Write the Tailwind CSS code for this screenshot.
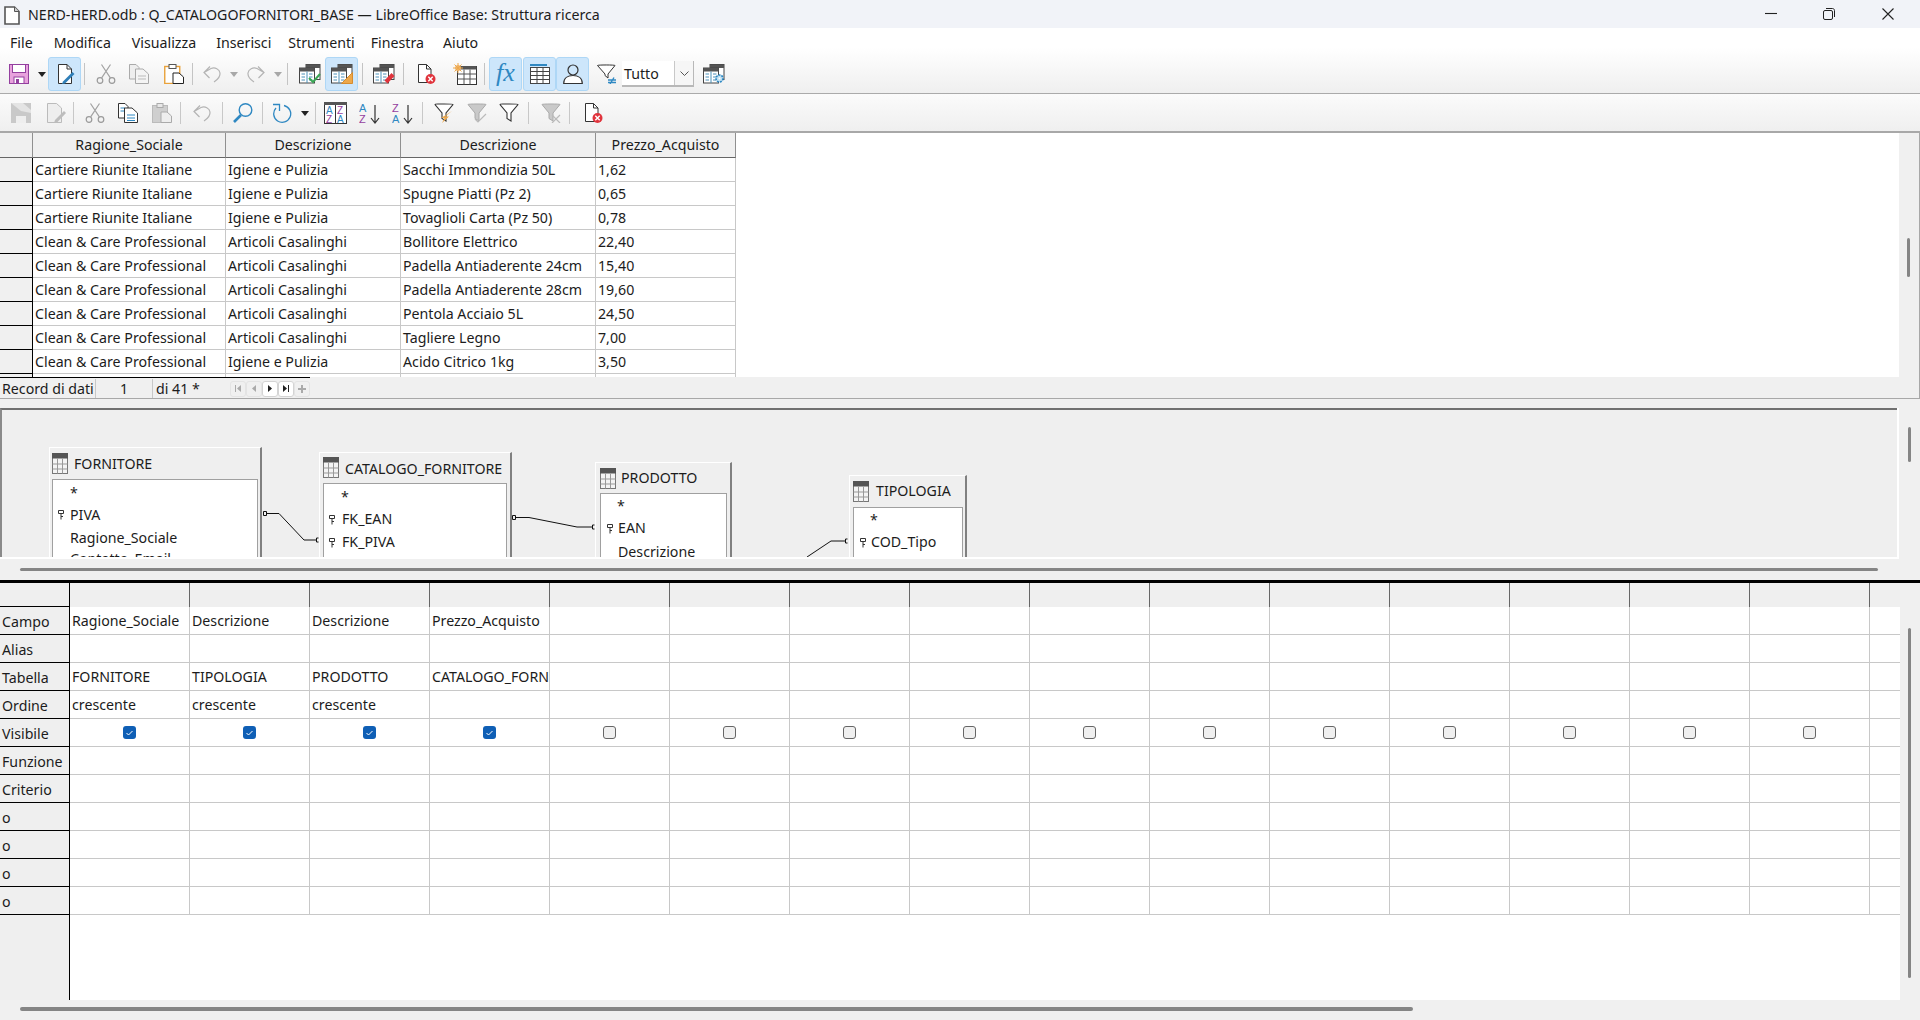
<!DOCTYPE html>
<html lang="it">
<head>
    <meta charset="UTF-8">
    <title>NERD-HERD.odb : Q_CATALOGOFORNITORI_BASE — LibreOffice Base: Struttura ricerca</title>
    <script src="https://cdn.jsdelivr.net/npm/@tailwindcss/browser@4"></script>
</head>
<body class="w-[1920px] h-[1020px] overflow-hidden bg-[#f0f0f0] text-[#1c1c1c] text-[14.2px] font-['Noto_Sans',sans-serif]">

    <!-- icon set -->
    <svg class="hidden">
        <symbol id="page" viewBox="0 0 20 20"><path d="M3.5 .5H12L16.5 5V19.5H3.5Z" fill="#fff" stroke="#333"/><path d="M12 .5V5H16.5" fill="none" stroke="#333"/></symbol>
        <symbol id="pagex" viewBox="0 0 20 20"><path d="M2.5 .5H10.5L15 5V18.5H2.5Z" fill="#fff" stroke="#333"/><path d="M10.5 .5V5H15" fill="none" stroke="#333"/><circle cx="14.5" cy="15" r="5" fill="#e0333c"/><path d="M12.3 12.8L16.7 17.2M16.7 12.8L12.3 17.2" stroke="#fff" stroke-width="1.4"/></symbol>
        <symbol id="cut" viewBox="0 0 20 20"><circle cx="4" cy="16.5" r="2.8" fill="none" stroke="#9a9a9a" stroke-width="1.2"/><circle cx="16" cy="16.5" r="2.8" fill="none" stroke="#9a9a9a" stroke-width="1.2"/><path d="M5.5 14.2L14.5 .5M14.5 14.2L5.5 .5" stroke="#a2a2a2" stroke-width="1.2"/></symbol>
        <symbol id="undo" viewBox="0 0 20 20"><path d="M8 2.5L2 8.5L7.5 14M2 8.5L9 4.5C13 3 17.5 5 18 9C18.5 13 15 16 12 18" fill="none" stroke="#b4b4b4" stroke-width="1.2"/></symbol>
        <symbol id="qbase" viewBox="0 0 22 20"><rect x="7" y=".5" width="14" height="15" fill="#fff" stroke="#444"/><rect x="7" y=".5" width="14" height="3.5" fill="#555"/><rect x=".5" y="4" width="15" height="15" fill="#fff" stroke="#444"/><rect x=".5" y="4" width="15" height="3.5" fill="#555"/><path d="M8 7.5V19M2.5 10H6M2.5 13H6M2.5 16H6M10 10H13.5M10 13H13.5M10 16H13.5" stroke="#4a90b8"/></symbol>
        <symbol id="tbl" viewBox="0 0 16 21"><rect x=".5" y=".5" width="15" height="20" fill="#f4f4f4" stroke="#777"/><rect width="16" height="5.5" fill="#555"/><path d="M.5 11H15.5M.5 16H15.5M5.5 5.5V20.5M10.5 5.5V20.5" stroke="#999"/></symbol>
        <symbol id="key" viewBox="0 0 6 10"><path d="M.5.5H5.5V3.5H.5ZM3 3.5V9.5M3 6.5H5" fill="none" stroke="#333"/></symbol>
        <symbol id="funnel" viewBox="0 0 20 20"><path d="M1 1.5C1 .8 19 .8 19 1.5L12 10V18L8 15.5V10Z" fill="#fff" stroke="#333" stroke-width="1.1"/></symbol>
    </svg>

    <!-- title bar -->
    <div class="h-[28px] bg-[#f1f3f8] flex items-center">
        <svg class="ml-[4px] mt-[3px] w-[16px] h-[19px]" viewBox="0 0 16 19"><path d="M1 1H10.5L15 5.5V18H1Z" fill="#fff" stroke="#555" stroke-width="1.6"/><path d="M10.5 1V5.5H15" fill="#ccc" stroke="#555"/></svg>
        <span class="ml-[8px] pt-[1px]">NERD-HERD.odb : Q_CATALOGOFORNITORI_BASE — LibreOffice Base: Struttura ricerca</span>
        <svg class="ml-auto w-[12px] h-[12px]" viewBox="0 0 12 12"><path d="M0 5.5H12" stroke="#222" stroke-width="1.1"/></svg>
        <svg class="ml-[46px] w-[12px] h-[12px]" viewBox="0 0 12 12"><rect x=".5" y="2.5" width="9" height="9" rx="1.5" fill="none" stroke="#222"/><path d="M3 .5H9.5C10.6 .5 11.5 1.4 11.5 2.5V9" fill="none" stroke="#222"/></svg>
        <svg class="ml-[47px] mr-[26px] w-[12px] h-[12px]" viewBox="0 0 12 12"><path d="M.5 .5L11.5 11.5M11.5 .5L.5 11.5" stroke="#222" stroke-width="1.1"/></svg>
    </div>

    <!-- menu + standard toolbar -->
    <div class="h-[66px] border-b border-[#aaaaaa] bg-gradient-to-b from-white from-30% to-[#efefef]">
        <div class="h-[29px] flex items-center">
            <span class="ml-[10px]">File</span>
            <span class="ml-[21px]">Modifica</span>
            <span class="ml-[21px]">Visualizza</span>
            <span class="ml-[20px]">Inserisci</span>
            <span class="ml-[17px]">Strumenti</span>
            <span class="ml-[16px]">Finestra</span>
            <span class="ml-[19px]">Aiuto</span>
        </div>
        <div class="h-[34px] flex items-center">
            <svg class="ml-[9px] w-[20px] h-[20px]" viewBox="0 0 20 20"><rect x=".5" y=".5" width="19" height="19" fill="#e8a2dd" stroke="#94409f"/><rect x="3.5" y=".5" width="13" height="8" fill="#fff" stroke="#94409f"/><rect x="5" y="13" width="10" height="6.5" fill="#fff" stroke="#94409f"/><rect x="7" y="15" width="3" height="4.5" fill="#94409f"/></svg>
            <svg class="ml-[9px] w-[8px] h-[5px]" viewBox="0 0 8 5"><path d="M0 0H8L4 5Z" fill="#222"/></svg>
            <div class="ml-[2px] w-[33px] h-[34px] flex items-center justify-center rounded-[3px] bg-[#cde6fb] border border-[#aed7f6]">
                <svg class="w-[20px] h-[20px]" viewBox="0 0 20 20"><use href="#page"/><path d="M17.5 8L19.5 10L10 19.5L7 20L8 17.5Z" fill="#2f7fb8"/></svg>
            </div>
            <div class="ml-[3px] w-px h-[22px] bg-[#c4c4c4]"></div>
            <svg class="ml-[11px] w-[20px] h-[20px]"><use href="#cut"/></svg>
            <svg class="ml-[13px] w-[20px] h-[20px]" viewBox="0 0 20 20"><path d="M.5 .5H7L10 3.5V15H.5Z" fill="#eee" stroke="#aaa"/><path d="M6.5 5H14L19.5 10V19.5H6.5Z" fill="#f4f4f4" stroke="#aaa"/><path d="M9 12H17M9 15H17" stroke="#bbb"/></svg>
            <svg class="ml-[15px] w-[20px] h-[20px]" viewBox="0 0 20 20"><rect x=".75" y="2.5" width="15" height="17" fill="#fff" stroke="#e9a23b" stroke-width="1.4"/><rect x="5" y=".5" width="7" height="4" fill="#fff" stroke="#555"/><path d="M9 9H15L19.5 13V19.5H9Z" fill="#fff" stroke="#222"/></svg>
            <div class="ml-[8px] w-px h-[22px] bg-[#c4c4c4]"></div>
            <svg class="ml-[9px] w-[20px] h-[20px]"><use href="#undo"/></svg>
            <svg class="ml-[8px] w-[8px] h-[5px]" viewBox="0 0 8 5"><path d="M0 0H8L4 5Z" fill="#a8a8a8"/></svg>
            <svg class="ml-[8px] w-[20px] h-[20px] -scale-x-100"><use href="#undo"/></svg>
            <svg class="ml-[8px] w-[8px] h-[5px]" viewBox="0 0 8 5"><path d="M0 0H8L4 5Z" fill="#a8a8a8"/></svg>
            <div class="ml-[5px] w-px h-[22px] bg-[#c4c4c4]"></div>
            <svg class="ml-[11px] w-[22px] h-[20px]" viewBox="0 0 22 20"><use href="#qbase"/><path d="M10 14L14 18L21 10" fill="none" stroke="#3aa655" stroke-width="2"/></svg>
            <div class="ml-[4px] w-[33px] h-[34px] flex items-center justify-center rounded-[3px] bg-[#cde6fb] border border-[#aed7f6]">
                <svg class="w-[22px] h-[20px]" viewBox="0 0 22 20"><use href="#qbase"/><path d="M21.5 8.5V19.5H10.5Z" fill="#eda84b" stroke="#d78c2e"/></svg>
            </div>
            <div class="ml-[4px] w-px h-[22px] bg-[#c4c4c4]"></div>
            <svg class="ml-[10px] w-[22px] h-[20px]" viewBox="0 0 22 20"><use href="#qbase"/><path d="M18.5 9L21.5 12L14.5 19.5L11.5 16.5Z" fill="#e0333c"/></svg>
            <div class="ml-[8px] w-px h-[22px] bg-[#c4c4c4]"></div>
            <svg class="ml-[12px] w-[20px] h-[20px]"><use href="#pagex"/></svg>
            <svg class="ml-[17px] w-[24px] h-[22px]" viewBox="0 0 24 22"><rect x="4.5" y="3.5" width="19" height="18" fill="#fff" stroke="#333"/><rect x="4.5" y="3" width="19" height="3.5" fill="#555"/><path d="M4.5 11H23.5M4.5 16H23.5M11 6.5V21.5M17 6.5V21.5" stroke="#555"/><circle cx="5" cy="5" r="3" fill="#f2b978"/><path d="M5 0V10M0 5H10M1.5 1.5L8.5 8.5M8.5 1.5L1.5 8.5" stroke="#eda84b"/></svg>
            <div class="ml-[7px] w-px h-[22px] bg-[#c4c4c4]"></div>
            <div class="ml-[4px] w-[33px] h-[34px] flex items-center justify-center rounded-[3px] bg-[#cde6fb] border border-[#aed7f6] text-[#2f88c2] text-[26px] italic font-['Liberation_Serif',serif] leading-none pb-[3px]">fx</div>
            <div class="ml-[1px] w-[33px] h-[34px] flex items-center justify-center rounded-[3px] bg-[#cde6fb] border border-[#aed7f6]">
                <svg class="w-[20px] h-[20px]" viewBox="0 0 20 20"><rect x=".5" y="3.5" width="19" height="16" fill="#fff" stroke="#444"/><path d="M0 1H17" stroke="#2f88c2" stroke-width="2"/><path d="M.5 7.5H19.5M.5 11.5H19.5M.5 15.5H19.5M7 3.5V19.5M13 3.5V19.5" stroke="#444"/></svg>
            </div>
            <div class="w-[33px] h-[34px] flex items-center justify-center rounded-[3px] bg-[#cde6fb] border border-[#aed7f6]">
                <svg class="w-[20px] h-[20px]" viewBox="0 0 20 20"><circle cx="10" cy="6" r="5" fill="none" stroke="#333" stroke-width="1.2"/><path d="M.7 19.5C.7 14 5 11.5 10 11.5S19.3 14 19.3 19.5Z" fill="#fff" stroke="#333" stroke-width="1.2"/></svg>
            </div>
            <svg class="ml-[8px] w-[20px] h-[20px]" viewBox="0 0 20 20"><path d="M.5 1.5C.5 .8 18 .8 18 1.5L11 10V14L8 11.5V10Z" fill="#fff" stroke="#333"/><path d="M11 16H19M11 18.5H19M17 13.5L13 20" stroke="#2f88c2" stroke-width="1.4"/></svg>
            <div class="ml-[5px] w-[72px] h-[26px] flex items-center bg-white border-b-2 border-r border-[#b8b8b8]">
                <span class="ml-[2px] flex-1 pt-[2px]">Tutto</span>
                <div class="w-[19px] h-[24px] flex items-center justify-center border-l border-[#c8c8c8] bg-[#f6f6f6]">
                    <svg class="w-[9px] h-[5px]" viewBox="0 0 9 5"><path d="M.5 .5L4.5 4.5L8.5 .5" fill="none" stroke="#555"/></svg>
                </div>
            </div>
            <svg class="ml-[9px] w-[22px] h-[20px]" viewBox="0 0 22 20"><use href="#qbase"/><circle cx="16.5" cy="14.5" r="3.5" fill="#bfe0f2" stroke="#2f88c2" stroke-width="1.6" stroke-dasharray="2 1"/><circle cx="16.5" cy="14.5" r="1" fill="#fff"/></svg>
        </div>
    </div>

    <!-- table data toolbar -->
    <div class="h-[39px] pt-[1px] border-b-2 border-[#a8a8a8] bg-gradient-to-b from-[#fbfbfb] to-[#efefef] flex items-center">
        <svg class="ml-[11px] w-[20px] h-[20px]" viewBox="0 0 20 20"><rect width="20" height="20" fill="#c9c9c9"/><path d="M0 0H12L20 7V10L10 8Z" fill="#e4e4e4"/><rect x="5" y="13" width="10" height="7" fill="#eee"/></svg>
        <svg class="ml-[15px] w-[20px] h-[20px]" viewBox="0 0 20 20"><path d="M1.5 .5H10.5L15.5 5V19.5H1.5Z" fill="#eee" stroke="#bbb"/><path d="M18 8L20 10L11 19.5L8 20L9 17Z" fill="#bdbdbd"/></svg>
        <div class="ml-[7px] w-px h-[22px] bg-[#c8c8c8]"></div>
        <svg class="ml-[11px] w-[20px] h-[20px]"><use href="#cut"/></svg>
        <svg class="ml-[13px] w-[20px] h-[20px]" viewBox="0 0 20 20"><path d="M.5 .5H7L10 3.5V15H.5Z" fill="#fff" stroke="#333"/><path d="M2.5 5H7M2.5 8H6" stroke="#2f88c2"/><path d="M6.5 5H14L19.5 10V19.5H6.5Z" fill="#fff" stroke="#333"/><path d="M9 12H17M9 15H17M9 17.5H17" stroke="#2f88c2"/></svg>
        <svg class="ml-[14px] w-[20px] h-[20px]" viewBox="0 0 20 20"><rect x=".5" y="2.5" width="15" height="17" fill="#cfcfcf" stroke="#bbb"/><rect x="5" y=".5" width="6" height="4" fill="#e8e8e8" stroke="#aaa"/><path d="M9 9H15L19.5 13V19.5H9Z" fill="#eee" stroke="#aaa"/></svg>
        <div class="ml-[8px] w-px h-[22px] bg-[#c8c8c8]"></div>
        <svg class="ml-[11px] w-[20px] h-[20px]"><use href="#undo"/></svg>
        <div class="ml-[10px] w-px h-[22px] bg-[#c8c8c8]"></div>
        <svg class="ml-[10px] w-[20px] h-[20px]" viewBox="0 0 20 20"><circle cx="12.5" cy="7" r="6.3" fill="none" stroke="#2f88c2" stroke-width="1.4"/><path d="M8 12L1 19" stroke="#2f88c2" stroke-width="2.6"/></svg>
        <div class="ml-[9px] w-px h-[22px] bg-[#c8c8c8]"></div>
        <svg class="ml-[9px] w-[20px] h-[20px]" viewBox="0 0 20 20"><path d="M12 2.5A8.5 8.5 0 1 1 4 5" fill="none" stroke="#2f88c2" stroke-width="1.3"/><path d="M1 1.5H7.5V8" fill="none" stroke="#2f88c2" stroke-width="1.3"/></svg>
        <svg class="ml-[9px] w-[8px] h-[5px]" viewBox="0 0 8 5"><path d="M0 0H8L4 5Z" fill="#222"/></svg>
        <div class="ml-[6px] w-px h-[22px] bg-[#c8c8c8]"></div>
        <svg class="ml-[8px] w-[23px] h-[22px]" viewBox="0 0 23 22" font-family="Liberation Sans" font-size="10"><rect x=".5" y=".5" width="22" height="21" fill="#fff" stroke="#333"/><rect width="23" height="3" fill="#555"/><path d="M11.5 3V21" stroke="#333"/><text x="2" y="12" fill="#2f88c2">A</text><text x="13" y="12" fill="#94409f">Z</text><text x="2" y="21" fill="#94409f">Z</text><text x="13" y="21" fill="#2f88c2">A</text></svg>
        <svg class="ml-[12px] w-[23px] h-[22px]" viewBox="0 0 23 22" font-family="Liberation Sans" font-size="11"><text x="0" y="10" fill="#2f88c2">A</text><text x="0" y="21" fill="#94409f">Z</text><path d="M16 3V21M12 16L16 21L20 16" fill="none" stroke="#333" stroke-width="1.2"/></svg>
        <svg class="ml-[10px] w-[23px] h-[22px]" viewBox="0 0 23 22" font-family="Liberation Sans" font-size="11"><text x="0" y="10" fill="#94409f">Z</text><text x="0" y="21" fill="#2f88c2">A</text><path d="M16 3V21M12 16L16 21L20 16" fill="none" stroke="#333" stroke-width="1.2"/></svg>
        <div class="ml-[7px] w-px h-[22px] bg-[#c8c8c8]"></div>
        <svg class="ml-[11px] w-[20px] h-[20px]" viewBox="0 0 20 20"><path d="M1 1.5C1 .8 19 .8 19 1.5L12 10V18L8 15.5V10Z" fill="#fff" stroke="#333" stroke-width="1.1"/><path d="M18 8L11 13.5H15L8 20L10.5 15H7Z" fill="#eda84b"/></svg>
        <svg class="ml-[13px] w-[20px] h-[20px]" viewBox="0 0 20 20"><path d="M1 1.5C1 .8 19 .8 19 1.5L12 10V18L8 15.5V10Z" fill="#c9c9c9" stroke="#aaa"/><path d="M8 16L11 19L19 11" fill="none" stroke="#bbb" stroke-width="1.2"/></svg>
        <svg class="ml-[12px] w-[20px] h-[20px]"><use href="#funnel"/></svg>
        <div class="ml-[9px] w-px h-[22px] bg-[#c8c8c8]"></div>
        <svg class="ml-[12px] w-[20px] h-[20px]" viewBox="0 0 20 20"><path d="M1 1.5C1 .8 19 .8 19 1.5L12 10V18L8 15.5V10Z" fill="#c9c9c9" stroke="#aaa"/><path d="M11 12L19 20M19 12L11 20" stroke="#bbb" stroke-width="1.2"/></svg>
        <div class="ml-[8px] w-px h-[22px] bg-[#c8c8c8]"></div>
        <svg class="ml-[13px] w-[20px] h-[20px]"><use href="#pagex"/></svg>
    </div>

    <!-- result grid -->
    <div class="h-[266px] border-r border-[#a8a8a8] flex flex-col">
        <div class="h-[244px] flex">
            <div class="w-[1899px] bg-white overflow-hidden">
                <div id="result" class="grid grid-cols-[33px_193px_175px_195px_140px] w-[736px]"></div>
            </div>
            <div class="ml-[8px] mt-[105px] w-[3px] h-[39px] rounded-full bg-[#858585]"></div>
        </div>
        <div class="h-[22px] pt-[2px] border-b border-[#a8a8a8] flex items-center relative">
            <div class="absolute left-0 top-0 w-[310px] border-t border-black"></div>
            <span class="ml-[2px] w-[93px] whitespace-nowrap">Record di dati</span>
            <div class="w-[58px] h-[19px] border-x border-[#c8c8c8] text-center leading-[19px]">1</div>
            <span class="ml-[3px] w-[74px]">di 41 *</span>
            <div class="flex h-[16px]">
                <div class="w-[16px] flex items-center justify-center border border-[#e4e4e4] rounded-[3px]"><svg class="w-[6px] h-[7px]" viewBox="0 0 6 7"><path d="M0 0H1V7H0ZM6 0V7L2 3.5Z" fill="#aaa"/></svg></div>
                <div class="w-[16px] flex items-center justify-center border border-[#e4e4e4] rounded-[3px]"><svg class="w-[4px] h-[7px]" viewBox="0 0 4 7"><path d="M4 0V7L0 3.5Z" fill="#aaa"/></svg></div>
                <div class="w-[16px] flex items-center justify-center border border-[#d4d4d4] rounded-[3px] bg-white"><svg class="w-[4px] h-[7px]" viewBox="0 0 4 7"><path d="M0 0V7L4 3.5Z" fill="#222"/></svg></div>
                <div class="w-[16px] flex items-center justify-center border border-[#d4d4d4] rounded-[3px] bg-white"><svg class="w-[6px] h-[7px]" viewBox="0 0 6 7"><path d="M0 0V7L4 3.5ZM5 0H6V7H5Z" fill="#222"/></svg></div>
                <div class="w-[16px] flex items-center justify-center border border-[#e4e4e4] rounded-[3px]"><svg class="w-[8px] h-[8px]" viewBox="0 0 8 8"><path d="M3 0H5V3H8V5H5V8H3V5H0V3H3Z" fill="#aaa"/></svg></div>
            </div>
        </div>
    </div>

    <!-- tables diagram -->
    <div class="mt-[9px] h-[151px] flex">
        <div class="w-[1899px] h-[151px] border-b-2 border-r-2 border-white">
            <div class="relative w-[1897px] h-[149px] overflow-hidden border-t-2 border-l-2 border-t-[#707070] border-l-[#8a8a8a] bg-[#efefef]">
                <svg class="absolute left-0 top-0 w-[1895px] h-[147px]" viewBox="2 410 1895 147" fill="none" stroke="#111">
                    <path d="M263.5 511.5H266.5V515.5H263.5ZM266.5 513.5H279L304 540H316M318.5 538H316.5V542H318.5"/>
                    <path d="M512.5 515.5H515.5V519.5H512.5ZM515.5 517.5H529L577 527H592M594.5 525H592.5V529H594.5"/>
                    <path d="M807 557L831 541H845M847.5 539H845.5V543H847.5"/>
                </svg>

                <!-- FORNITORE -->
                <div class="absolute left-[47px] top-[37px] w-[213px] h-[130px] border-t border-l border-white border-r-2 border-r-[#808080]">
                    <svg class="absolute left-[2px] top-[5px] w-[16px] h-[21px]"><use href="#tbl"/></svg>
                    <span class="absolute left-[24px] top-[5px]">FORNITORE</span>
                    <div class="absolute left-[2px] top-[31px] w-[206px] h-[100px] bg-white border border-[#a0a0a0]">
                        <span class="absolute left-[17px] top-[2px]">*</span>
                        <svg class="absolute left-[5px] top-[30px] w-[6px] h-[10px]"><use href="#key"/></svg>
                        <span class="absolute left-[17px] top-[24px]">PIVA</span>
                        <span class="absolute left-[17px] top-[47px]">Ragione_Sociale</span>
                        <span class="absolute left-[17px] top-[68px]">Contatto_Email</span>
                    </div>
                </div>

                <!-- CATALOGO_FORNITORE -->
                <div class="absolute left-[317px] top-[42px] w-[193px] h-[130px] border-t border-l border-white border-r-2 border-r-[#808080]">
                    <svg class="absolute left-[3px] top-[4px] w-[16px] h-[21px]"><use href="#tbl"/></svg>
                    <span class="absolute left-[25px] top-[5px]">CATALOGO_FORNITORE</span>
                    <div class="absolute left-[3px] top-[30px] w-[184px] h-[100px] bg-white border border-[#a0a0a0]">
                        <span class="absolute left-[17px] top-[2px]">*</span>
                        <svg class="absolute left-[5px] top-[31px] w-[6px] h-[10px]"><use href="#key"/></svg>
                        <span class="absolute left-[18px] top-[24px]">FK_EAN</span>
                        <svg class="absolute left-[5px] top-[54px] w-[6px] h-[10px]"><use href="#key"/></svg>
                        <span class="absolute left-[18px] top-[47px]">FK_PIVA</span>
                    </div>
                </div>

                <!-- PRODOTTO -->
                <div class="absolute left-[593px] top-[52px] w-[137px] h-[120px] border-t border-l border-white border-r-2 border-r-[#808080]">
                    <svg class="absolute left-[4px] top-[5px] w-[16px] h-[21px]"><use href="#tbl"/></svg>
                    <span class="absolute left-[25px] top-[4px]">PRODOTTO</span>
                    <div class="absolute left-[4px] top-[30px] w-[127px] h-[100px] bg-white border border-[#a0a0a0]">
                        <span class="absolute left-[16px] top-[1px]">*</span>
                        <svg class="absolute left-[6px] top-[30px] w-[6px] h-[10px]"><use href="#key"/></svg>
                        <span class="absolute left-[17px] top-[23px]">EAN</span>
                        <span class="absolute left-[17px] top-[47px]">Descrizione</span>
                    </div>
                </div>

                <!-- TIPOLOGIA -->
                <div class="absolute left-[847px] top-[65px] w-[118px] h-[100px] border-t border-l border-white border-r-2 border-r-[#808080]">
                    <svg class="absolute left-[3px] top-[5px] w-[16px] h-[21px]"><use href="#tbl"/></svg>
                    <span class="absolute left-[26px] top-[4px]">TIPOLOGIA</span>
                    <div class="absolute left-[3px] top-[31px] w-[110px] h-[80px] bg-white border border-[#a0a0a0]">
                        <span class="absolute left-[16px] top-[1px]">*</span>
                        <svg class="absolute left-[6px] top-[30px] w-[6px] h-[10px]"><use href="#key"/></svg>
                        <span class="absolute left-[17px] top-[23px]">COD_Tipo</span>
                    </div>
                </div>
            </div>
        </div>
        <div class="ml-[9px] mt-[19px] w-[3px] h-[35px] rounded-full bg-[#858585]"></div>
    </div>

    <!-- horizontal scrollbar of the diagram -->
    <div class="h-[21px] pt-[9px]">
        <div class="ml-[20px] w-[1858px] h-[3px] rounded-full bg-[#858585]"></div>
    </div>

    <!-- criteria grid -->
    <div class="border-t-[3px] border-black h-[420px] flex">
        <div class="w-[1900px] flex flex-col">
            <div id="design" class="shrink-0"></div>
            <div class="flex-1 flex">
                <div class="w-[70px] bg-[#efefef] border-r border-black"></div>
                <div class="flex-1 bg-white"></div>
            </div>
        </div>
        <div class="ml-[8px] mt-[45px] w-[3px] h-[350px] rounded-full bg-[#858585]"></div>
    </div>

    <!-- bottom scrollbar -->
    <div class="h-[17px] pt-[7px]">
        <div class="ml-[20px] w-[1393px] h-[4px] rounded-full bg-[#858585]"></div>
    </div>

    <script>
        // result rows
        const rows = [
            ['Cartiere Riunite Italiane', 'Igiene e Pulizia', 'Sacchi Immondizia 50L', '1,62'],
            ['Cartiere Riunite Italiane', 'Igiene e Pulizia', 'Spugne Piatti (Pz 2)', '0,65'],
            ['Cartiere Riunite Italiane', 'Igiene e Pulizia', 'Tovaglioli Carta (Pz 50)', '0,78'],
            ['Clean &amp; Care Professional', 'Articoli Casalinghi', 'Bollitore Elettrico', '22,40'],
            ['Clean &amp; Care Professional', 'Articoli Casalinghi', 'Padella Antiaderente 24cm', '15,40'],
            ['Clean &amp; Care Professional', 'Articoli Casalinghi', 'Padella Antiaderente 28cm', '19,60'],
            ['Clean &amp; Care Professional', 'Articoli Casalinghi', 'Pentola Acciaio 5L', '24,50'],
            ['Clean &amp; Care Professional', 'Articoli Casalinghi', 'Tagliere Legno', '7,00'],
            ['Clean &amp; Care Professional', 'Igiene e Pulizia', 'Acido Citrico 1kg', '3,50'],
        ];
        const headCell = 'h-[25px] bg-[#f0f0f0] border-b border-r border-b-[#666666] border-r-[#909090] text-center leading-[24px]';
        const rowHead = 'h-[24px] bg-[#f0f0f0] border-b border-r border-black';
        const dataCell = 'h-[24px] bg-white border-b border-r border-[#c8c8c8] pl-[2px] leading-[23px] whitespace-nowrap overflow-hidden';

        let html = `<div class="${headCell}"></div>`;
        ['Ragione_Sociale', 'Descrizione', 'Descrizione', 'Prezzo_Acquisto'].forEach(h => {
            html += `<div class="${headCell}">${h}</div>`;
        });
        rows.forEach(r => {
            html += `<div class="${rowHead}"></div>`;
            r.forEach(c => { html += `<div class="${dataCell}">${c}</div>`; });
        });
        html += '<div class="h-[3px] bg-[#f0f0f0] border-r border-black"></div>';
        for (let i = 0; i < 4; i++) html += '<div class="h-[3px] border-r border-[#c8c8c8]"></div>';
        document.getElementById('result').innerHTML = html;

        // criteria rows
        const design = [
            ['Campo', ['Ragione_Sociale', 'Descrizione', 'Descrizione', 'Prezzo_Acquisto']],
            ['Alias', []],
            ['Tabella', ['FORNITORE', 'TIPOLOGIA', 'PRODOTTO', 'CATALOGO_FORNITORE']],
            ['Ordine', ['crescente', 'crescente', 'crescente']],
            ['Visibile', null],
            ['Funzione', []],
            ['Criterio', []],
            ['o', []], ['o', []], ['o', []], ['o', []],
        ];
        const checked = '<div class="w-[13px] h-[13px] rounded-[3px] bg-[#0f5fb5] flex items-center justify-center"><svg class="w-[7px] h-[6px]" viewBox="0 0 7 6"><path d="M.5 3L2.5 5L6.5 1" fill="none" stroke="#fff"/></svg></div>';
        const empty = '<div class="w-[13px] h-[13px] rounded-[3px] bg-[#f0f0f0] border border-[#666666]"></div>';

        let d = '<div class="flex h-[24px] bg-[#efefef]"><div class="w-[70px] border-r border-b border-black"></div>';
        for (let c = 0; c < 15; c++) d += '<div class="w-[120px] border-r border-[#666666]"></div>';
        d += '</div>';
        design.forEach(([label, cells]) => {
            d += '<div class="flex h-[28px]">';
            d += `<div class="w-[70px] pl-[2px] pt-[5px] bg-[#efefef] border-r border-b border-black leading-[20px]">${label}</div>`;
            for (let c = 0; c < 16; c++) {
                const w = c < 15 ? 'w-[120px] border-r' : 'w-[30px]';
                let inner = '';
                let pad = 'pl-[2px] pt-[4px]';
                if (cells === null) {
                    pad = '';
                    if (c < 15) inner = `<div class="h-full flex items-center justify-center">${c < 4 ? checked : empty}</div>`;
                } else if (cells[c]) inner = cells[c];
                d += `<div class="${w} ${pad} bg-white border-b border-[#c8c8c8] leading-[20px] whitespace-nowrap overflow-hidden">${inner}</div>`;
            }
            d += '</div>';
        });
        document.getElementById('design').innerHTML = d;
    </script>
</body>
</html>
